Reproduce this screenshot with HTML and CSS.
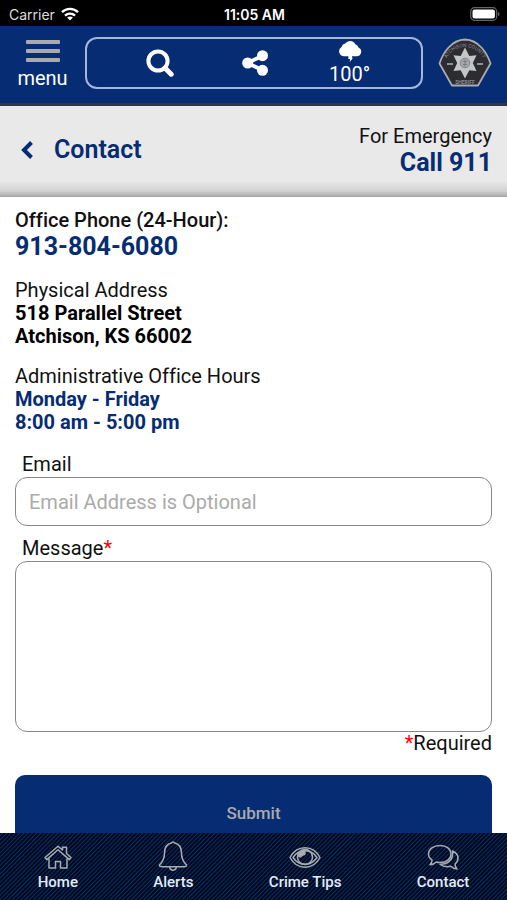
FILE: index.html
```
<!DOCTYPE html>
<html lang="en">
<head>
  <meta charset="UTF-8">
  <meta name="viewport" content="width=device-width, initial-scale=1.0">
  <title>Contact</title>
  <link rel="stylesheet" href="styles.css">
</head>
<body>
  <div class="status-bar">
    <div class="carrier">
      <span>Carrier</span>
      <svg width="18" height="14" viewBox="0 0 18 14" fill="none" stroke="#fff" stroke-width="2.4">
        <path d="M1 5.200C5.500 .7 12.500 .7 17 5.200"/>
        <path d="M4 8.600C6.800 5.900 11.200 5.900 14 8.600"/>
        <path d="M9 13.400L6.100 10.600C7.700 9.200 10.300 9.200 11.900 10.600Z" fill="#fff" stroke="none"/>
      </svg>
    </div>
    <span class="time">11:05 AM</span>
    <div class="battery">
      <svg width="30" height="14" viewBox="0 0 30 14">
        <rect x=".7" y=".7" width="26" height="12.600" rx="3.800" fill="none" stroke="#666" stroke-width="1.200"/>
        <rect x="2.500" y="2.500" width="22.400" height="9" rx="2" fill="#fff"/>
        <path d="M28 5v4q1.600-.5 1.600-2T28 5z" fill="#666"/>
      </svg>
    </div>
  </div>

  <header class="app-header">
    <button type="button" class="menu-btn">
      <span class="menu-lines"><i></i><i></i><i></i></span>
      menu
    </button>
    <div class="tools">
      <button type="button" aria-label="Search">
        <svg width="28" height="28" viewBox="0 0 28 28" fill="none" stroke="#fff">
          <circle cx="12" cy="12" r="9.600" stroke-width="4"/>
          <path d="M19 19l6.200 6.200" stroke-width="5" stroke-linecap="round"/>
        </svg>
      </button>
      <button type="button" aria-label="Share">
        <svg width="26" height="26" viewBox="0 0 26 26" fill="#fff" stroke="#fff">
          <path d="M20.500 5.700L5.500 13L20.500 20.300" fill="none" stroke-width="3.800"/>
          <circle cx="20.500" cy="5.700" r="5.500" stroke="none"/>
          <circle cx="5.700" cy="13" r="5.500" stroke="none"/>
          <circle cx="20.500" cy="20.300" r="5.500" stroke="none"/>
        </svg>
      </button>
      <button type="button" class="weather">
        <svg width="24" height="22" viewBox="0 0 24 22" fill="#fff">
          <path d="M5.500 16.200A5 5 0 0 1 3.600 6.900A4.600 4.600 0 0 1 7.200 3.600A6 6 0 0 1 17.400 4.200A4.400 4.400 0 0 1 20.500 7.400A4.600 4.600 0 0 1 18.800 16.200H14V17.800H15L11.800 21.900L12 19H10.400V16.200Z"/>
        </svg>
        100°
      </button>
    </div>
    <a href="#" class="badge" aria-label="Atchison County Sheriff">
      <svg width="54" height="50" viewBox="0 0 54 50">
        <defs>
          <path id="arc" d="M7 25A20.500 20.500 0 0 1 47 25"/>
        </defs>
        <path d="M1.500 25.500C5 15 13 2 27 1.500C41 2 49 15 52.500 25.500L40 47.500H14Z" fill="#2c2c31" stroke="#a9abb0" stroke-width="1.800" stroke-linejoin="round"/>
        <text class="badge-text"><textPath href="#arc" startOffset="50%" text-anchor="middle">ATCHISON COUNTY</textPath></text>
        <path d="M27 9.500L31.300 18L38.500 17.200L34.800 25L38.500 33L31.300 32.200L27 40.500L22.700 32.200L15.500 33L19.200 25L15.500 17.200L22.700 18Z" fill="#c3c5c9"/>
        <circle cx="27" cy="25" r="4.800" fill="#a5a7ab" stroke="#77787c" stroke-width=".8"/>
        <path d="M27 21.500v7M25 23.500h4M25 26.500h4" stroke="#77787c" stroke-width=".9"/>
        <path d="M9 26h6M39 26h6" stroke="#8f9195" stroke-width="2"/>
        <text class="badge-text bold" x="27" y="46" text-anchor="middle">SHERIFF</text>
      </svg>
    </a>
  </header>

  <div class="title-bar">
    <a href="#" class="back">
      <svg width="12" height="18" viewBox="0 0 12 18" fill="none" stroke="#062c73" stroke-width="4">
        <path d="M10.500 1.500L3 9l7.500 7.500"/>
      </svg>
      <h1>Contact</h1>
    </a>
    <div class="emergency">
      <span>For Emergency</span>
      <a href="tel:911">Call 911</a>
    </div>
  </div>

  <main>
    <section>
      <p class="medium">Office Phone (24-Hour):</p>
      <a href="tel:9138046080" class="phone">913-804-6080</a>
    </section>
    <section>
      <p>Physical Address</p>
      <p class="strong">518 Parallel Street</p>
      <p class="strong">Atchison, KS 66002</p>
    </section>
    <section>
      <p>Administrative Office Hours</p>
      <p class="strong blue">Monday - Friday</p>
      <p class="strong blue">8:00 am - 5:00 pm</p>
    </section>

    <form>
      <label for="email">Email</label>
      <input type="email" id="email" name="email" placeholder="Email Address is Optional">
      <label for="message">Message<span class="star">*</span></label>
      <textarea id="message" name="message" required></textarea>
      <p class="required"><span class="star">*</span>Required</p>
      <button type="submit" class="submit">Submit</button>
    </form>
  </main>

  <nav class="tabs">
    <a href="#">
      <svg width="30" height="32" viewBox="0 0 30 32">
        <path d="M2 17.500L15 6.200L19.500 10V7.200H23.500V13.500L28 17.500L26.300 19.600L15 9.800L3.700 19.600Z"/>
        <path d="M6 18.500V28H12.500V21.500H17.500V28H24V18.500"/>
      </svg>
      Home
    </a>
    <a href="#">
      <svg width="30" height="32" viewBox="0 0 30 32">
        <path d="M13.500 3A1.600 1.600 0 0 1 16.500 3C21.500 4 23.500 8.500 23.500 13C23.500 19 25 21.500 28.500 25C29 26.600 27 26.800 19 26.800H11C3 26.800 1 26.600 1.500 25C5 21.500 6.500 19 6.500 13C6.500 8.500 8.500 4 13.500 3Z"/>
        <path d="M11.500 27C12.500 31.200 17.500 31.200 18.500 27"/>
      </svg>
      Alerts
    </a>
    <a href="#">
      <svg width="32" height="32" viewBox="0 0 32 32">
        <path d="M1 17.500C8 4.500 24 4.500 31 17.500C24 30.500 8 30.500 1 17.500Z"/>
        <path d="M4 17.500C10 8.500 22 8.500 28 17.500C22 26.500 10 26.500 4 17.500Z"/>
        <circle cx="16" cy="17" r="7.500"/>
        <path d="M17 10C15.500 11.500 17.500 13 16.500 14.500C15.500 16 14 15 13 16.500C12 18 10.500 17.500 9 16.500C9.500 12.500 13 9.800 17 10Z" fill="#a9abb0" stroke="none"/>
      </svg>
      Crime Tips
    </a>
    <a href="#">
      <svg width="32" height="32" viewBox="0 0 32 32">
        <path d="M13 5.500C19.500 5.500 24 9 24 14S19.500 22.500 13 22.500C11.700 22.500 10.500 22.400 9.300 22C7.500 23.800 5.500 24.600 3 24.800C4.300 23.500 5 22 5 20C2.500 18.500 1.500 16.500 1.500 14C1.500 9 6.500 5.500 13 5.500Z"/>
        <path d="M25.500 11C29 12.500 31 15 31 18C31 20.500 30 22.500 28 24C28 26 28.500 27.500 30 29C27.500 29 25.500 28 23.800 26.300C19 27.200 15.500 26.300 13 24.200C20 24.500 27 20 25.500 11Z"/>
      </svg>
      Contact
    </a>
  </nav>
</body>
</html>
```
FILE: styles.css
```
* {
  box-sizing: border-box;
}

body {
  margin: 0;
  height: 100vh;
  display: flex;
  flex-direction: column;
  overflow: hidden;
  background-color: #fff;
  color: #111;
  font-family: Roboto, "Liberation Sans", sans-serif;
  font-size: 20px;
  font-variant-ligatures: none;
  line-height: 23px;
}
p, h1 {
  margin: 0;
}
a {
  color: #062c73;
  text-decoration: none;
}
button {
  padding: 0;
  border: none;
  background: none;
  color: #fff;
  font-family: inherit;
  cursor: pointer;
}
svg {
  display: block;
}

/* Phone status bar */
.status-bar {
  display: grid;
  grid-template-columns: 1fr auto 1fr;
  align-items: center;
  flex-shrink: 0;
  height: 26px;
  padding: 2px 7px 0 9px;
  background-color: #000;
  color: #ddd;
  font-family: Inter, sans-serif;
  font-size: 14px;
}
.carrier {
  display: flex;
  align-items: center;
  gap: 6px;
}
.time {
  color: #fff;
  font-weight: 600;
}
.battery {
  justify-self: end;
}

/* Header */
.app-header {
  display: flex;
  align-items: center;
  flex-shrink: 0;
  height: 80px;
  padding: 0 15px 4px 0;
  background-color: #062c73;
  border-bottom: 3px solid #333540;
}
.menu-btn {
  width: 85px;
  display: flex;
  flex-direction: column;
  align-items: center;
  gap: 5px;
  padding-top: 3px;
  font-size: 20px;
  line-height: 22px;
}
.menu-lines {
  display: flex;
  flex-direction: column;
  gap: 5px;
}
.menu-lines i {
  width: 34px;
  height: 4px;
  border-radius: 1px;
  background-color: #aaa;
}
.tools {
  flex: 1;
  display: flex;
  align-items: center;
  height: 52px;
  padding: 0 24px 0 26px;
  border: 2px solid #a5b6dc;
  border-radius: 12px;
}
.tools button {
  flex: 1;
  display: flex;
  flex-direction: column;
  align-items: center;
}
.tools .weather {
  font-size: 20px;
  line-height: 24px;
}
.badge {
  margin-left: 15px;
}
.badge-text {
  fill: #8b8d92;
  font-size: 5px;
}
.badge-text.bold {
  font-weight: bold;
}

/* Page title */
.title-bar {
  display: flex;
  justify-content: space-between;
  align-items: center;
  flex-shrink: 0;
  height: 91px;
  padding: 0 15px 4px 21px;
  background-color: #e9e9e9;
  background-image: linear-gradient(to top, #a5a5a5, #d2d2d2 6px, #e9e9e9 16px);
}
.back {
  display: flex;
  align-items: center;
  gap: 21px;
}
.back h1 {
  font-size: 25px;
  font-weight: 600;
  line-height: 28px;
}
.emergency {
  display: flex;
  flex-direction: column;
  align-items: flex-end;
  padding-top: 4px;
}
.emergency a, .phone {
  font-size: 25px;
  font-weight: bold;
  line-height: 30px;
}

/* Content */
main {
  flex: 1;
  min-height: 0;
  padding: 12px 15px 0;
  overflow: hidden;
}
section {
  margin-bottom: 17px;
}
.phone {
  display: block;
}
.medium {
  font-weight: 500;
}
.strong {
  color: #000;
  font-weight: bold;
}
.strong.blue {
  color: #062c73;
}
label {
  display: block;
  padding-left: 7px;
  line-height: 26px;
}
input, textarea {
  display: block;
  width: 100%;
  border: 1px solid #888;
  border-radius: 12px;
  padding: 0 13px;
  font-family: inherit;
  font-size: 20px;
  outline: none;
}
input {
  height: 49px;
  margin-bottom: 9px;
}
input::placeholder {
  color: #aaa;
}
textarea {
  height: 171px;
  padding: 12px 13px;
  resize: none;
}
.star {
  color: #f00;
}
.required {
  text-align: right;
}
.submit {
  width: 100%;
  height: 75px;
  margin-top: 20px;
  border-radius: 10px;
  background-color: #062c73;
  color: #aaa;
  font-size: 17px;
  font-weight: 500;
}

/* Bottom tabs */
.tabs {
  display: flex;
  justify-content: space-around;
  flex-shrink: 0;
  height: 67px;
  padding-top: 7px;
  background: repeating-linear-gradient(135deg, #000818 0, #000818 1px, #07306f 2px, #000818 3px);
}
.tabs a {
  display: flex;
  flex-direction: column;
  align-items: center;
  color: #e6ebf5;
  font-size: 15px;
  font-weight: 500;
  line-height: 20px;
}
.tabs svg {
  fill: none;
  stroke: #a9abb0;
  stroke-width: 1.5;
  stroke-linejoin: round;
}
```
